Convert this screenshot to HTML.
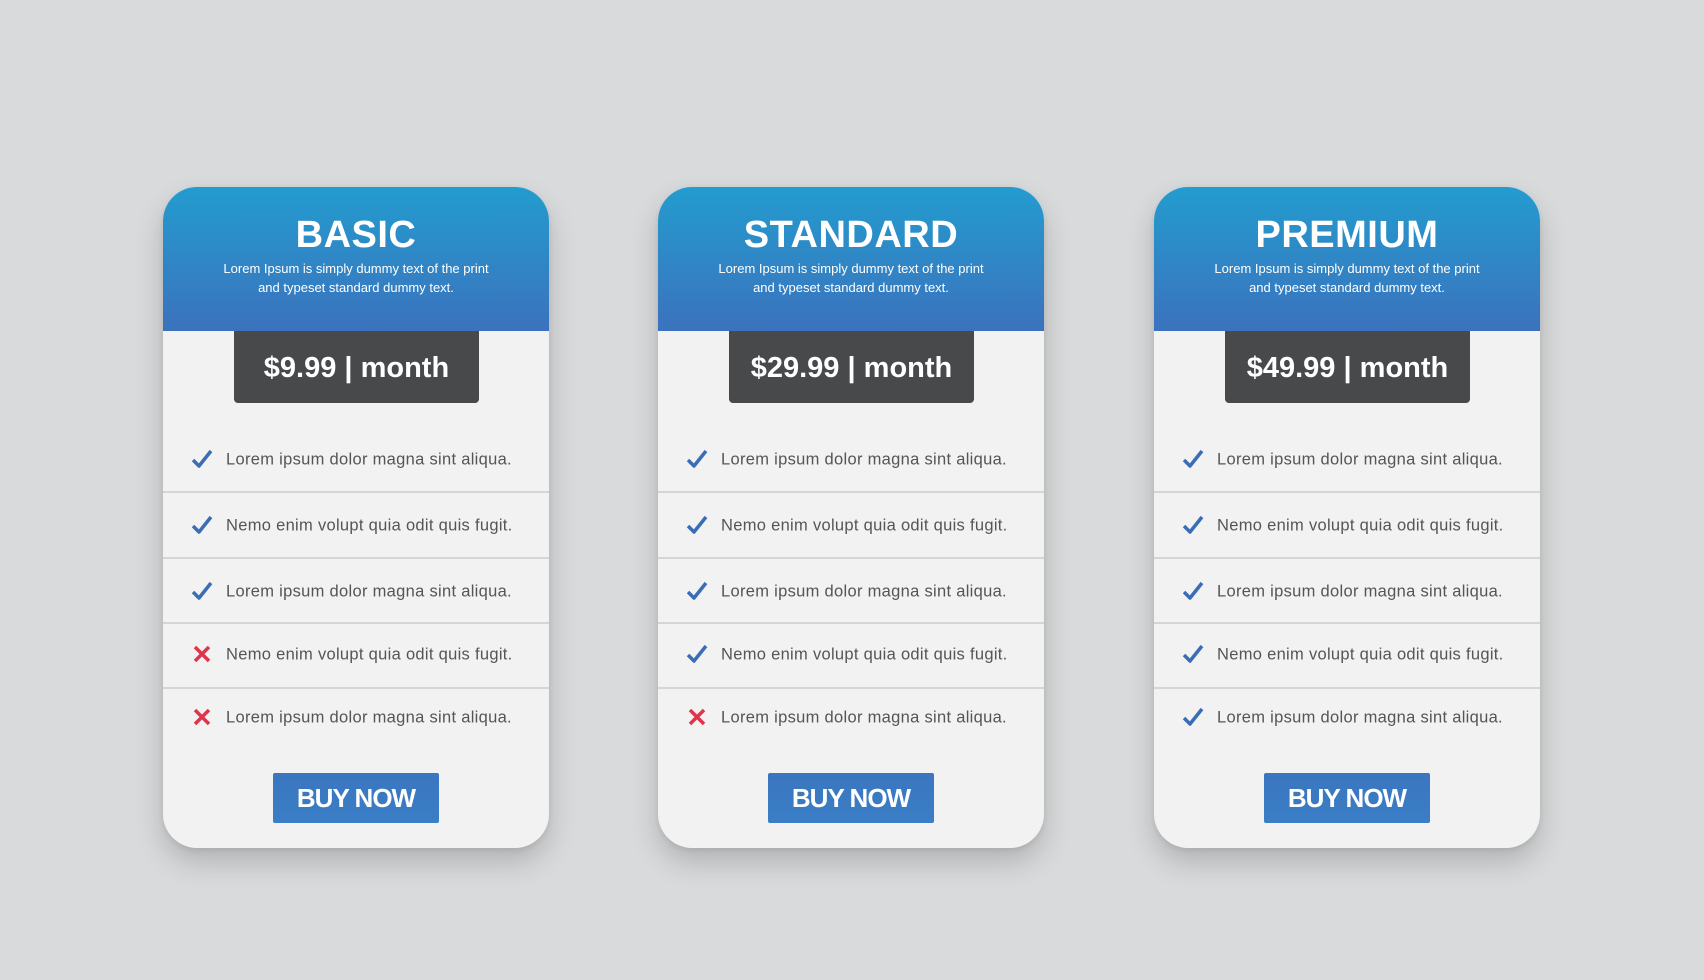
<!DOCTYPE html>
<html><head><meta charset="utf-8"><style>
body{margin:0;width:1704px;height:980px;background:#d8dadb;position:relative;overflow:hidden;font-family:"Liberation Sans",sans-serif}
.card{position:absolute;top:187px;width:386px;height:661px;background:#f2f2f2;border-radius:34px;box-shadow:0 14px 28px rgba(0,0,0,.18),0 2px 6px rgba(0,0,0,.08);overflow:hidden}
.hd{position:absolute;left:0;top:0;width:100%;height:144px;background:linear-gradient(#239ccf,#3b72bd);color:#fff;text-align:center}
.hd h2{margin:0;position:absolute;top:27px;width:100%;font-size:38px;font-weight:bold;letter-spacing:.5px}
.hd p{margin:0;position:absolute;top:72px;width:100%;font-size:13px;line-height:19px}
.price{position:absolute;left:71px;top:144px;width:245px;height:72px;background:#48494b;border-radius:0 0 4px 4px;color:#fff;font-size:29px;font-weight:bold;text-align:center;line-height:74px}
.row{position:absolute;left:0;width:100%;height:64px;font-size:16.5px;letter-spacing:.3px;color:#555}
.row span{position:absolute;left:63px;top:50%;transform:translateY(-45%)}
.row svg{position:absolute;left:28px;top:50%;transform:translateY(-50%)}
.sep{position:absolute;left:0;width:100%;height:2px;background:#d5d5d5}
.btn{position:absolute;left:110px;top:586px;width:166px;height:50px;background:linear-gradient(#3b76c0,#3a7ec6);border-radius:2px;color:#fff;font-size:26px;font-weight:bold;text-align:center;line-height:50px;letter-spacing:-1px}
</style></head><body>
<div class="card" style="left:163px">
<div class="hd"><h2>BASIC</h2><p>Lorem Ipsum is simply dummy text of the print<br>and typeset standard dummy text.</p></div>
<div class="price">$9.99 | month</div>
<div class="row" style="top:240px"><svg width="22" height="20" viewBox="0 0 22 20"><path d="M2 11l6 6L20 2" stroke="#3b6db5" stroke-width="3.5" fill="none" stroke-linejoin="round"/></svg><span>Lorem ipsum dolor magna sint aliqua.</span></div>
<div class="sep" style="top:304px"></div>
<div class="row" style="top:306px"><svg width="22" height="20" viewBox="0 0 22 20"><path d="M2 11l6 6L20 2" stroke="#3b6db5" stroke-width="3.5" fill="none" stroke-linejoin="round"/></svg><span>Nemo enim volupt quia odit quis fugit.</span></div>
<div class="sep" style="top:370px"></div>
<div class="row" style="top:372px"><svg width="22" height="20" viewBox="0 0 22 20"><path d="M2 11l6 6L20 2" stroke="#3b6db5" stroke-width="3.5" fill="none" stroke-linejoin="round"/></svg><span>Lorem ipsum dolor magna sint aliqua.</span></div>
<div class="sep" style="top:435px"></div>
<div class="row" style="top:435px"><svg width="22" height="20" viewBox="0 0 22 20"><path d="M4 3l14 14M18 3L4 17" stroke="#e0344a" stroke-width="3.5" fill="none"/></svg><span>Nemo enim volupt quia odit quis fugit.</span></div>
<div class="sep" style="top:500px"></div>
<div class="row" style="top:498px"><svg width="22" height="20" viewBox="0 0 22 20"><path d="M4 3l14 14M18 3L4 17" stroke="#e0344a" stroke-width="3.5" fill="none"/></svg><span>Lorem ipsum dolor magna sint aliqua.</span></div>
<div class="btn">BUY NOW</div>
</div>

<div class="card" style="left:658px">
<div class="hd"><h2>STANDARD</h2><p>Lorem Ipsum is simply dummy text of the print<br>and typeset standard dummy text.</p></div>
<div class="price">$29.99 | month</div>
<div class="row" style="top:240px"><svg width="22" height="20" viewBox="0 0 22 20"><path d="M2 11l6 6L20 2" stroke="#3b6db5" stroke-width="3.5" fill="none" stroke-linejoin="round"/></svg><span>Lorem ipsum dolor magna sint aliqua.</span></div>
<div class="sep" style="top:304px"></div>
<div class="row" style="top:306px"><svg width="22" height="20" viewBox="0 0 22 20"><path d="M2 11l6 6L20 2" stroke="#3b6db5" stroke-width="3.5" fill="none" stroke-linejoin="round"/></svg><span>Nemo enim volupt quia odit quis fugit.</span></div>
<div class="sep" style="top:370px"></div>
<div class="row" style="top:372px"><svg width="22" height="20" viewBox="0 0 22 20"><path d="M2 11l6 6L20 2" stroke="#3b6db5" stroke-width="3.5" fill="none" stroke-linejoin="round"/></svg><span>Lorem ipsum dolor magna sint aliqua.</span></div>
<div class="sep" style="top:435px"></div>
<div class="row" style="top:435px"><svg width="22" height="20" viewBox="0 0 22 20"><path d="M2 11l6 6L20 2" stroke="#3b6db5" stroke-width="3.5" fill="none" stroke-linejoin="round"/></svg><span>Nemo enim volupt quia odit quis fugit.</span></div>
<div class="sep" style="top:500px"></div>
<div class="row" style="top:498px"><svg width="22" height="20" viewBox="0 0 22 20"><path d="M4 3l14 14M18 3L4 17" stroke="#e0344a" stroke-width="3.5" fill="none"/></svg><span>Lorem ipsum dolor magna sint aliqua.</span></div>
<div class="btn">BUY NOW</div>
</div>

<div class="card" style="left:1154px">
<div class="hd"><h2>PREMIUM</h2><p>Lorem Ipsum is simply dummy text of the print<br>and typeset standard dummy text.</p></div>
<div class="price">$49.99 | month</div>
<div class="row" style="top:240px"><svg width="22" height="20" viewBox="0 0 22 20"><path d="M2 11l6 6L20 2" stroke="#3b6db5" stroke-width="3.5" fill="none" stroke-linejoin="round"/></svg><span>Lorem ipsum dolor magna sint aliqua.</span></div>
<div class="sep" style="top:304px"></div>
<div class="row" style="top:306px"><svg width="22" height="20" viewBox="0 0 22 20"><path d="M2 11l6 6L20 2" stroke="#3b6db5" stroke-width="3.5" fill="none" stroke-linejoin="round"/></svg><span>Nemo enim volupt quia odit quis fugit.</span></div>
<div class="sep" style="top:370px"></div>
<div class="row" style="top:372px"><svg width="22" height="20" viewBox="0 0 22 20"><path d="M2 11l6 6L20 2" stroke="#3b6db5" stroke-width="3.5" fill="none" stroke-linejoin="round"/></svg><span>Lorem ipsum dolor magna sint aliqua.</span></div>
<div class="sep" style="top:435px"></div>
<div class="row" style="top:435px"><svg width="22" height="20" viewBox="0 0 22 20"><path d="M2 11l6 6L20 2" stroke="#3b6db5" stroke-width="3.5" fill="none" stroke-linejoin="round"/></svg><span>Nemo enim volupt quia odit quis fugit.</span></div>
<div class="sep" style="top:500px"></div>
<div class="row" style="top:498px"><svg width="22" height="20" viewBox="0 0 22 20"><path d="M2 11l6 6L20 2" stroke="#3b6db5" stroke-width="3.5" fill="none" stroke-linejoin="round"/></svg><span>Lorem ipsum dolor magna sint aliqua.</span></div>
<div class="btn">BUY NOW</div>
</div>
</body></html>
